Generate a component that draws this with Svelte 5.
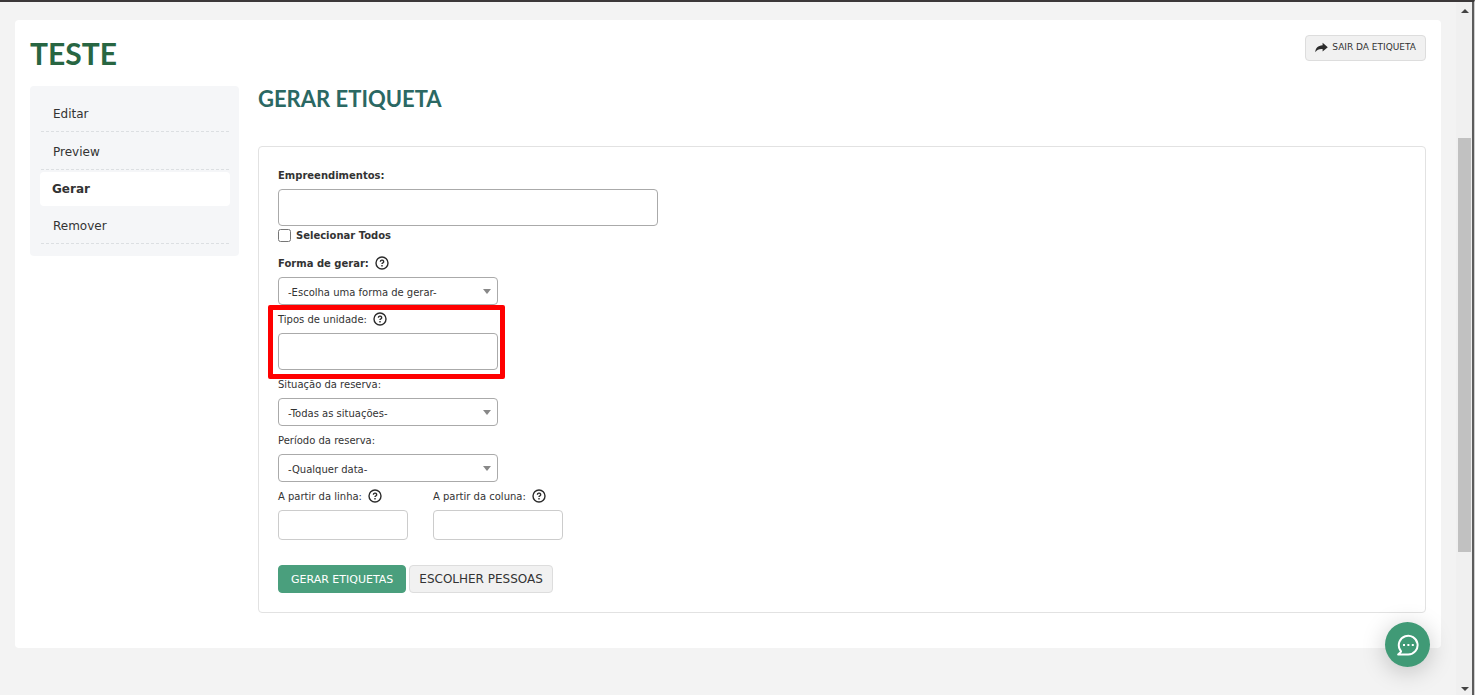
<script>
  const menu = ["Editar", "Preview", "Gerar", "Remover"];
  let current = $state("Gerar");

  let form = $state({
    empreendimentos: "",
    todos: false,
    forma: "",
    tipos: "",
    situacao: "",
    periodo: "",
    linha: "",
    coluna: "",
  });
</script>

{#snippet help()}
  <svg class="help" viewBox="0 0 14 14" aria-hidden="true">
    <circle cx="7" cy="7" r="6" />
    <path d="M5.4 5.7a1.65 1.5 0 1 1 2.5 1.2c-.6.3-.9.6-.9 1.1" />
    <path d="M7 9.1v1.3" />
  </svg>
{/snippet}

{#snippet select(key, text)}
  <div class="select">
    <select id={key} bind:value={form[key]}>
      <option value="">{text}</option>
    </select>
  </div>
{/snippet}

<div class="window">
  <div class="page">
    <main class="panel">
      <header>
        <h1>TESTE</h1>
        <button type="button" class="btn exit">
          <svg viewBox="0 0 13 11" aria-hidden="true">
            <path d="M7.6 0.8 12.8 5.2 7.6 9.6V7.1C4.2 6.9 2 7.6 0.3 10.2 0.4 6.4 3 3.5 7.6 3.3Z" />
          </svg>
          SAIR DA ETIQUETA
        </button>
      </header>

      <div class="columns">
        <nav>
          {#each menu as item}
            <a
              href="#{item.toLowerCase()}"
              class:active={item === current}
              onclick={() => (current = item)}>{item}</a
            >
          {/each}
        </nav>

        <section>
          <h2>GERAR ETIQUETA</h2>

          <form class="card" onsubmit={(e) => e.preventDefault()}>
            <div class="field wide">
              <label class="required" for="empreendimentos">Empreendimentos:</label>
              <input id="empreendimentos" class="multi" type="text" bind:value={form.empreendimentos} />
            </div>
            <label class="check required">
              <input type="checkbox" bind:checked={form.todos} />
              Selecionar Todos
            </label>

            <div class="field">
              <label class="required" for="forma">Forma de gerar: {@render help()}</label>
              {@render select("forma", "-Escolha uma forma de gerar-")}
            </div>
            <div class="field highlight">
              <label for="tipos">Tipos de unidade: {@render help()}</label>
              <input id="tipos" class="multi" type="text" bind:value={form.tipos} />
            </div>
            <div class="field">
              <label for="situacao">Situação da reserva:</label>
              {@render select("situacao", "-Todas as situações-")}
            </div>
            <div class="field">
              <label for="periodo">Período da reserva:</label>
              {@render select("periodo", "-Qualquer data-")}
            </div>

            <div class="pair">
              <div class="field small">
                <label for="linha">A partir da linha: {@render help()}</label>
                <input id="linha" type="text" bind:value={form.linha} />
              </div>
              <div class="field small">
                <label for="coluna">A partir da coluna: {@render help()}</label>
                <input id="coluna" type="text" bind:value={form.coluna} />
              </div>
            </div>

            <div class="actions">
              <button type="submit" class="btn primary">GERAR ETIQUETAS</button>
              <button type="button" class="btn">ESCOLHER PESSOAS</button>
            </div>
          </form>
        </section>
      </div>
    </main>
  </div>

  <div class="scrollbar" aria-hidden="true">
    <svg viewBox="0 0 8 4"><path d="M0 4 4 0l4 4Z" /></svg>
    <div class="track"><div class="thumb"></div></div>
    <svg viewBox="0 0 8 4"><path d="M0 0 4 4l4-4Z" /></svg>
  </div>

  <button type="button" class="chat" aria-label="Chat">
    <svg viewBox="0 0 22 22" aria-hidden="true">
      <path d="M1.2 20.5h10a9.4 9.4 0 1 0-8.3-5c.5 1 1.6 1.8 1 2.4Z" />
      <path class="dots" d="M6 11h2M10.4 11h2M14.8 11h2" />
    </svg>
  </button>
</div>

<style>
  :global(body) {
    margin: 0;
    background: #f3f3f3;
  }

  .window {
    box-sizing: border-box;
    display: grid;
    grid-template-columns: 1fr 16px;
    min-height: 100vh;
    border-top: 2px solid #3b3839;
    border-right: 1px solid #d0d0d0;
    box-shadow: inset -2px 0 #5c5c5c;
    padding-right: 2px;
    color: #333;
    font-family: Verdana, "DejaVu Sans", sans-serif;
    font-size: 10px;
  }

  .page {
    padding: 18px 15px 47px;
  }

  .panel {
    background: #fff;
    border-radius: 4px;
    padding: 15px 15px 35px;
  }

  header {
    display: flex;
    justify-content: space-between;
    align-items: flex-start;
    height: 51px;
  }

  h1,
  h2 {
    margin: 0;
    font-family: Lato, sans-serif;
    font-weight: bold;
  }

  h1 {
    color: #286642;
    font-size: 30px;
    line-height: 36px;
  }

  h2 {
    color: #2b6863;
    font-size: 22px;
    line-height: 26px;
    margin-bottom: 34px;
  }

  .columns {
    display: grid;
    grid-template-columns: 209px 1fr;
    gap: 19px;
    align-items: start;
  }

  nav {
    display: flex;
    flex-direction: column;
    background: #f5f6f8;
    border-radius: 4px;
    padding: 8px 9px 12px 10px;
  }

  nav a {
    margin: 0 1px;
    padding: 3px 12px 0;
    border-bottom: 1px dashed #dcdfe2;
    color: #333;
    font-size: 12px;
    line-height: 34px;
    text-decoration: none;
  }

  nav a.active {
    margin: 2px 0 0;
    padding-top: 0;
    background: #fff;
    border: 0;
    border-radius: 4px;
    font-weight: bold;
  }

  .card {
    border: 1px solid #e2e2e2;
    border-radius: 4px;
    padding: 14px 19px 19px;
  }

  .field {
    width: 220px;
  }

  .field.wide {
    width: 380px;
    max-width: 100%;
  }

  .field.small {
    width: 130px;
  }

  .field label {
    display: flex;
    align-items: center;
    gap: 6px;
    height: 28px;
    white-space: nowrap;
  }

  .required {
    font-weight: bold;
  }

  .help {
    width: 14px;
    height: 14px;
    fill: none;
    stroke: #2b2b2b;
    stroke-width: 1.4;
  }

  input[type="text"],
  select {
    display: block;
    box-sizing: border-box;
    width: 100%;
    height: 30px;
    border: 1px solid #ccc;
    border-radius: 4px;
    background: #fff;
    padding: 0 9px;
    color: #333;
    font: inherit;
  }

  input.multi {
    height: 37px;
    border-color: #aaa;
  }

  .select {
    position: relative;
  }

  select {
    appearance: none;
    height: 28px;
    border-color: #aaa;
    padding-top: 2px;
  }

  .select::after {
    content: "";
    position: absolute;
    top: 12px;
    right: 7px;
    border: 4px solid transparent;
    border-top: 5px solid #888;
    border-bottom: 0;
    pointer-events: none;
  }

  .check {
    display: flex;
    align-items: center;
    gap: 5px;
    height: 19px;
    margin-bottom: 4px;
  }

  .check input {
    width: 13px;
    height: 13px;
    margin: 0;
  }

  .highlight {
    position: relative;
  }

  .highlight::after {
    content: "";
    position: absolute;
    inset: 0 -7px -9px -10px;
    border: 5px solid #f00;
    border-radius: 2px;
    pointer-events: none;
  }

  .pair {
    display: flex;
    gap: 25px;
  }

  .actions {
    display: flex;
    gap: 3px;
    margin-top: 25px;
  }

  .btn {
    height: 28px;
    padding: 0 9px;
    border: 1px solid #ddd;
    border-radius: 4px;
    background: #f1f1f1;
    color: #333;
    font-family: inherit;
    font-size: 12px;
    white-space: nowrap;
    cursor: pointer;
  }

  .btn.primary {
    border-color: #4a9f7d;
    background: #4a9f7d;
    color: #fff;
    padding: 0 12px;
    font-size: 11px;
  }

  .exit {
    display: flex;
    align-items: center;
    gap: 4px;
    height: 26px;
    padding-bottom: 2px;
    font-size: 9px;
  }

  .exit svg {
    width: 13px;
    height: 11px;
    fill: #2b2b2b;
  }

  .scrollbar {
    display: flex;
    flex-direction: column;
    align-items: center;
    background: #f0f0f0;
    padding: 7px 1px 4px 2px;
  }

  .scrollbar svg {
    width: 8px;
    height: 4px;
    fill: #444;
  }

  .track {
    flex: 1;
    width: 100%;
    display: grid;
    grid-template-rows: 125fr 413fr 135fr;
  }

  .thumb {
    grid-row: 2;
    background: #c1c1c1;
  }

  .chat {
    position: fixed;
    right: 45px;
    bottom: 28px;
    display: grid;
    place-items: center;
    width: 45px;
    height: 45px;
    padding: 0;
    border: 0;
    border-radius: 50%;
    background: #409a76;
    box-shadow: 0 4px 24px rgba(0, 0, 0, 0.22);
    cursor: pointer;
  }

  .chat svg {
    width: 22px;
    height: 22px;
    fill: none;
    stroke: #fff;
    stroke-width: 2;
    stroke-linejoin: round;
  }
</style>
